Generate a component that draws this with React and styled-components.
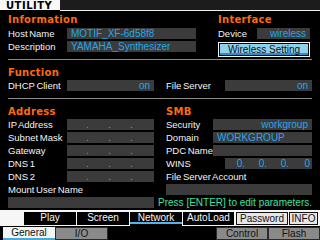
import React from "react";
import styled, { createGlobalStyle } from "styled-components";

const SANS = `"Liberation Sans", Arial, sans-serif`;
const HEAVY = `"DejaVu Sans", "Liberation Sans", sans-serif`;

const GlobalStyle = createGlobalStyle`
  html, body { margin: 0; padding: 0; background: #000; }
  body {
    width: 320px; height: 240px; overflow: hidden;
    font-family: ${SANS}; font-size: 10px; color: #f4f4f4;
  }
  #root { width: 320px; height: 240px; }
`;

const Screen = styled.div`
  width: 320px;
  height: 240px;
  display: flex;
  flex-direction: column;
  background: #000;
  overflow: hidden;
`;

const Header = styled.div`
  display: flex;
  align-items: flex-start;
  height: 11px;
`;

const Title = styled.div`
  width: 60px;
  height: 10px;
  box-sizing: border-box;
  padding-left: 6px;
  background: #f8f8f8;
  color: #000;
  font-family: ${HEAVY};
  font-weight: bold;
  font-size: 10px;
  line-height: 12px;
  letter-spacing: 0.5px;
  overflow: hidden;
`;

const HeaderBar = styled.div`
  flex: 1;
  height: 10px;
  background: #1c1c1c;
  border-bottom: 1px solid #f0f0f0;
`;

const Content = styled.div`
  display: flex;
  flex-direction: column;
  padding: 0 8px;
`;

const TopBlock = styled.div`
  display: flex;
  gap: 22px;
  padding-top: 3px;
`;

const Column = styled.div`
  display: flex;
  flex-direction: column;
  width: ${(p) => (p.$w ? `${p.$w}px` : "auto")};
  min-width: 0;
`;

const Heading = styled.div`
  height: 12px;
  margin-bottom: ${(p) => p.$mb ?? 1}px;
  font-family: ${HEAVY};
  font-weight: bold;
  font-size: 10px;
  line-height: 12px;
  letter-spacing: 0.3px;
  color: #ff6a0a;
  white-space: nowrap;
`;

const Rows = styled.div`
  display: flex;
  flex-direction: column;
  gap: 2px;
`;

const FieldRow = styled.div`
  display: flex;
  height: 11px;
`;

const Label = styled.div`
  width: ${(p) => p.$w ?? 59}px;
  flex: none;
  font-size: 9.5px;
  word-spacing: -1px;
  line-height: 11px;
  white-space: nowrap;
  color: #f4f4f4;
`;

const Field = styled.div`
  flex: 1;
  min-width: 0;
  background: #3b3b3b;
  color: #21a8ee;
  line-height: 11px;
  padding: 0 4px;
  text-align: ${(p) => p.$align ?? "left"};
  white-space: nowrap;
  overflow: hidden;
`;

const AddressField = styled.div`
  flex: 1;
  display: grid;
  grid-template-columns: 22px 22px 22px 1fr;
  background: #3b3b3b;
  color: #21a8ee;
  line-height: 11px;
  white-space: nowrap;
`;

const AddressPart = styled.span`
  text-align: right;
  padding-right: ${(p) => p.$pad}px;
`;

const SettingButton = styled.button`
  display: flex;
  margin: 3px 0 0;
  height: 15px;
  box-sizing: border-box;
  padding: 1px;
  border: 1px solid #f4f4f4;
  background: #000;
  cursor: pointer;
`;

const ButtonFace = styled.span`
  flex: 1;
  box-sizing: border-box;
  height: 11px;
  background: #8ed1ec;
  border-bottom: 2px solid #1f95cf;
  color: #101010;
  font-family: ${SANS};
  font-size: 10px;
  line-height: 11px;
  text-align: center;
  white-space: nowrap;
`;

const Separator = styled.div`
  height: 1px;
  background: #8a8a8a;
  margin: ${(p) => p.$top}px 0 7px;
`;

const TwoColumns = styled.div`
  display: grid;
  grid-template-columns: 146px 146px;
  column-gap: 12px;
`;

const Hint = styled.div`
  display: flex;
  justify-content: flex-end;
  height: 11px;
  line-height: 11px;
  color: #3ce0a4;
  white-space: nowrap;
`;

const TabBar = styled.div`
  margin-top: auto;
  display: flex;
  flex-direction: column;
`;

const PageTabs = styled.div`
  display: flex;
  align-items: flex-start;
  gap: 1px;
  height: 16px;
  box-sizing: border-box;
  padding: 2px 0 0 24px;
  background: #f6f6f6;
`;

const PageTab = styled.div`
  width: ${(p) => p.$w ?? 52}px;
  height: ${(p) => (p.$active ? 14 : 13)}px;
  box-sizing: border-box;
  margin-left: ${(p) => p.$ml ?? 0}px;
  text-align: center;
  line-height: 12px;
  white-space: nowrap;
  ${(p) =>
    p.$boxed
      ? `background: #e6e6e6; color: #111; border: 1px solid #111; line-height: 11px;`
      : p.$active
      ? `background: linear-gradient(to bottom, #000 0 10px, #57b3e4 10px 12px, #000 12px); color: #f4f4f4;`
      : `background: #000; color: #f4f4f4;`}
`;

const GroupTabs = styled.div`
  display: flex;
  align-items: flex-start;
  height: 14px;
  box-sizing: border-box;
  padding: 1px 0 0 3px;
  background: #000;
`;

const GroupTab = styled.div`
  width: ${(p) => p.$w ?? 52}px;
  height: 13px;
  box-sizing: border-box;
  margin-left: ${(p) => (p.$push ? "auto" : "0")};
  text-align: center;
  line-height: 11px;
  color: #111;
  white-space: nowrap;
  ${(p) =>
    p.$active
      ? `background: linear-gradient(to bottom, #f4f4f4 0 11px, #4aa8dc 11px 13px); line-height: 12px;`
      : `background: #8a8a8a; border: 1px solid #2a2a2a;`}
`;

const dots = [".", ".", ".", ""];

function Address({ parts = dots, pad = 0 }) {
  return (
    <AddressField>
      {parts.map((v, i) => (
        <AddressPart key={i} $pad={pad}>
          {v}
        </AddressPart>
      ))}
    </AddressField>
  );
}

export default function App() {
  return (
    <>
      <GlobalStyle />
      <Screen>
        <Header>
          <Title>UTILITY</Title>
          <HeaderBar />
        </Header>

        <Content>
          <TopBlock>
            <Column $w={188}>
              <Heading $mb={2}>Information</Heading>
              <Rows>
                <FieldRow>
                  <Label>Host Name</Label>
                  <Field>MOTIF_XF-6d58f8</Field>
                </FieldRow>
                <FieldRow>
                  <Label>Description</Label>
                  <Field>YAMAHA_Synthesizer</Field>
                </FieldRow>
              </Rows>
            </Column>
            <Column $w={92}>
              <Heading $mb={2}>Interface</Heading>
              <FieldRow>
                <Label $w={39}>Device</Label>
                <Field $align="right">wireless</Field>
              </FieldRow>
              <SettingButton type="button">
                <ButtonFace>Wireless Setting</ButtonFace>
              </SettingButton>
            </Column>
          </TopBlock>

          <Separator $top={2} />

          <Heading>Function</Heading>
          <TwoColumns>
            <FieldRow>
              <Label>DHCP Client</Label>
              <Field $align="right">on</Field>
            </FieldRow>
            <FieldRow>
              <Label>File Server</Label>
              <Field $align="right">on</Field>
            </FieldRow>
          </TwoColumns>

          <Separator $top={7} />

          <TwoColumns>
            <Column>
              <Heading>Address</Heading>
              <Rows>
                <FieldRow>
                  <Label>IP Address</Label>
                  <Address />
                </FieldRow>
                <FieldRow>
                  <Label>Subnet Mask</Label>
                  <Address />
                </FieldRow>
                <FieldRow>
                  <Label>Gateway</Label>
                  <Address />
                </FieldRow>
                <FieldRow>
                  <Label>DNS 1</Label>
                  <Address />
                </FieldRow>
                <FieldRow>
                  <Label>DNS 2</Label>
                  <Address />
                </FieldRow>
                <FieldRow>
                  <Label $w={146}>Mount User Name</Label>
                </FieldRow>
                <FieldRow>
                  <Field />
                </FieldRow>
              </Rows>
            </Column>
            <Column>
              <Heading>SMB</Heading>
              <Rows>
                <FieldRow>
                  <Label $w={47}>Security</Label>
                  <Field $align="right">workgroup</Field>
                </FieldRow>
                <FieldRow>
                  <Label $w={47}>Domain</Label>
                  <Field>WORKGROUP</Field>
                </FieldRow>
                <FieldRow>
                  <Label $w={47}>PDC Name</Label>
                  <Field />
                </FieldRow>
                <FieldRow>
                  <Label>WINS</Label>
                  <Address parts={["0.", "0.", "0.", "0"]} pad={2} />
                </FieldRow>
                <FieldRow>
                  <Label $w={146}>File Server Account</Label>
                </FieldRow>
                <FieldRow>
                  <Field />
                </FieldRow>
                <Hint>
                  <span>Press [ENTER] to edit parameters.</span>
                </Hint>
              </Rows>
            </Column>
          </TwoColumns>
        </Content>

        <TabBar>
          <PageTabs>
            <PageTab>Play</PageTab>
            <PageTab>Screen</PageTab>
            <PageTab $active>Network</PageTab>
            <PageTab $w={51}>AutoLoad</PageTab>
            <PageTab $boxed $ml={1}>Password</PageTab>
            <PageTab $boxed $w={29}>INFO</PageTab>
          </PageTabs>
          <GroupTabs>
            <GroupTab $active>General</GroupTab>
            <GroupTab $w={53}>I/O</GroupTab>
            <GroupTab $push>Control</GroupTab>
            <GroupTab>Flash</GroupTab>
          </GroupTabs>
        </TabBar>
      </Screen>
    </>
  );
}
